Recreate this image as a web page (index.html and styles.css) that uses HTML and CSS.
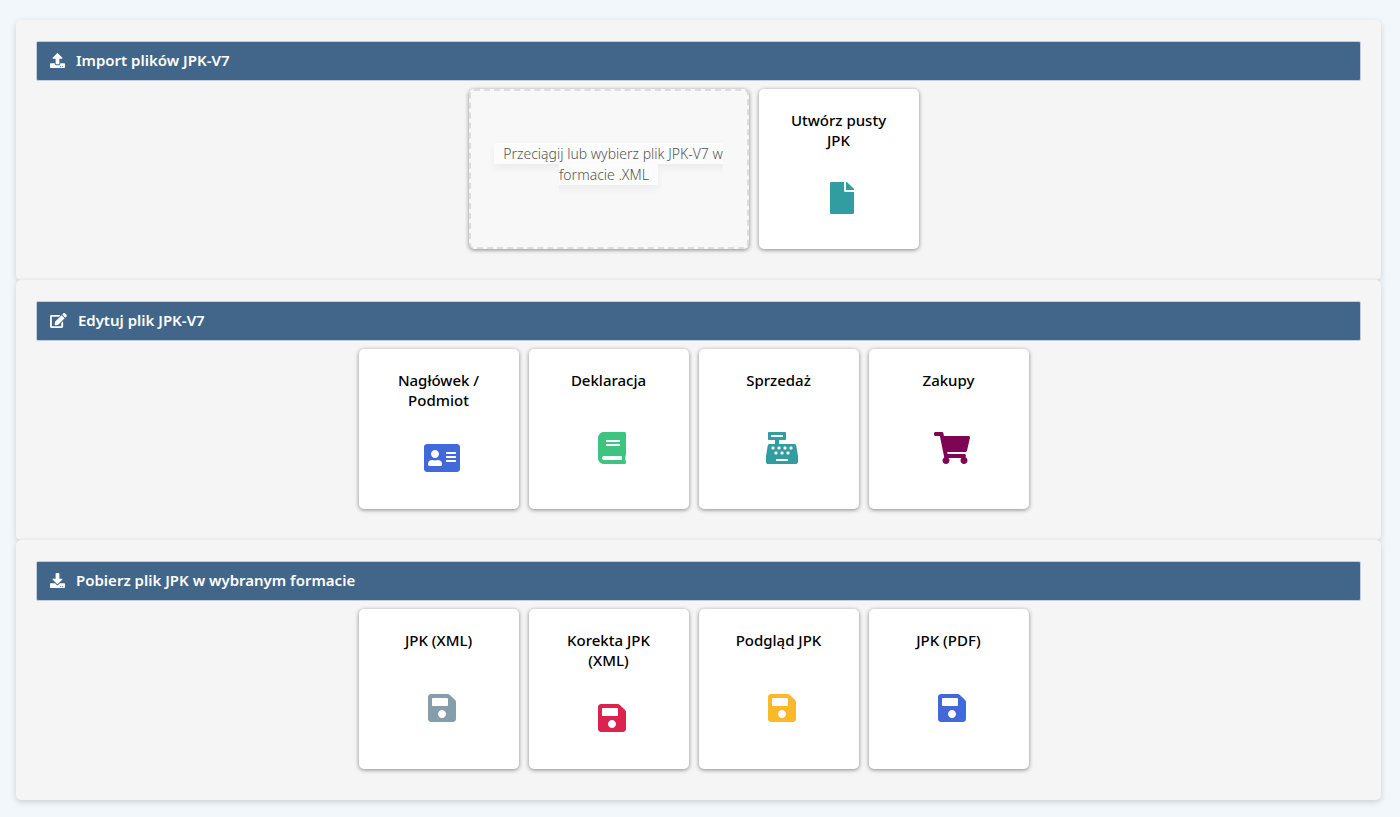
FILE: index.html
```
<!DOCTYPE html>
<html lang="pl">
<head>
    <meta charset="UTF-8">
    <meta name="viewport" content="width=device-width, initial-scale=1.0">
    <title>JPK-V7</title>
    <link rel="stylesheet" href="styles.css">
</head>
<body>
    <svg class="sprite" aria-hidden="true">
        <symbol id="save" viewBox="0 0 448 512">
            <path d="M433.941 129.941l-83.882-83.882A48 48 0 0 0 316.118 32H48C21.49 32 0 53.49 0 80v352c0 26.51 21.49 48 48 48h352c26.51 0 48-21.49 48-48V163.882a48 48 0 0 0-14.059-33.941zM224 416c-35.346 0-64-28.654-64-64 0-35.346 28.654-64 64-64s64 28.654 64 64c0 35.346-28.654 64-64 64zm96-304.52V212c0 6.627-5.373 12-12 12H76c-6.627 0-12-5.373-12-12V108c0-6.627 5.373-12 12-12h228.52c3.183 0 6.235 1.264 8.485 3.515l3.48 3.48A11.996 11.996 0 0 1 320 111.48z"/>
        </symbol>
    </svg>

    <main class="container">
        <section class="panel">
            <h2 class="panel-header">
                <svg class="header-icon" viewBox="0 0 512 512" aria-hidden="true"><path d="M296 384h-80c-13.3 0-24-10.7-24-24V192h-87.7c-17.8 0-26.7-21.5-14.1-34.1L242.3 5.7c7.5-7.5 19.8-7.5 27.3 0l152.2 152.2c12.6 12.6 3.7 34.1-14.1 34.1H320v168c0 13.3-10.7 24-24 24zm216-8v112c0 13.3-10.7 24-24 24H24c-13.3 0-24-10.7-24-24V376c0-13.3 10.7-24 24-24h136v8c0 30.9 25.1 56 56 56h80c30.9 0 56-25.1 56-56v-8h136c13.3 0 24 10.7 24 24zm-124 88c0-11-9-20-20-20s-20 9-20 20 9 20 20 20 20-9 20-20zm64 0c0-11-9-20-20-20s-20 9-20 20 9 20 20 20 20-9 20-20z"/></svg>
                Import plików JPK-V7
            </h2>
            <div class="tiles">
                <label class="tile dropzone" for="jpk_file">
                    <input class="file-input" type="file" id="jpk_file" accept=".xml">
                    <span class="dropzone-body"><span class="dropzone-text">Przeciągij lub wybierz plik JPK-V7 w formacie .XML</span></span>
                </label>
                <button class="tile" type="button">
                    <span class="tile-title">Utwórz pusty JPK</span>
                    <span class="tile-icon teal"><svg viewBox="0 0 384 512" aria-hidden="true"><path d="M224 136V0H24C10.7 0 0 10.7 0 24v464c0 13.3 10.7 24 24 24h336c13.3 0 24-10.7 24-24V160H248c-13.2 0-24-10.8-24-24zm160-14.1v6.1H256V0h6.1c6.4 0 12.5 2.5 17 7l97.9 98c4.5 4.5 7 10.6 7 16.9z"/></svg></span>
                </button>
            </div>
        </section>

        <section class="panel">
            <h2 class="panel-header">
                <svg class="header-icon" viewBox="0 0 576 512" aria-hidden="true"><path d="M402.6 83.2l90.2 90.2c3.8 3.8 3.8 10 0 13.8L274.4 405.6l-92.8 10.3c-12.4 1.4-22.9-9.1-21.5-21.5l10.3-92.8L388.8 83.2c3.8-3.8 10-3.8 13.8 0zm162-22.9l-48.8-48.8c-15.2-15.2-39.9-15.2-55.2 0l-35.4 35.4c-3.8 3.8-3.8 10 0 13.8l90.2 90.2c3.8 3.8 10 3.8 13.8 0l35.4-35.4c15.2-15.3 15.2-40 0-55.2zM384 346.2V448H64V128h229.8c3.2 0 6.2-1.3 8.5-3.5l40-40c7.6-7.6 2.2-20.5-8.5-20.5H48C21.5 64 0 85.5 0 112v352c0 26.5 21.5 48 48 48h352c26.5 0 48-21.5 48-48V306.2c0-10.7-12.9-16-20.5-8.5l-40 40c-2.2 2.3-3.5 5.3-3.5 8.5z"/></svg>
                Edytuj plik JPK-V7
            </h2>
            <div class="tiles">
                <button class="tile" type="button">
                    <span class="tile-title">Nagłówek / Podmiot</span>
                    <span class="tile-icon blue"><svg viewBox="0 0 576 512" aria-hidden="true"><path d="M528 32H48C21.5 32 0 53.5 0 80v352c0 26.5 21.5 48 48 48h480c26.5 0 48-21.5 48-48V80c0-26.5-21.5-48-48-48zm-352 96c35.3 0 64 28.7 64 64s-28.7 64-64 64-64-28.7-64-64 28.7-64 64-64zm112 236.8c0 10.6-10 19.2-22.4 19.2H86.4C74 384 64 375.4 64 364.8v-19.2c0-31.8 30.1-57.6 67.2-57.6h5c12.3 5.1 25.7 8 39.8 8s27.6-2.9 39.8-8h5c37.1 0 67.2 25.8 67.2 57.6v19.2zM512 312c0 4.4-3.6 8-8 8H360c-4.4 0-8-3.6-8-8v-16c0-4.4 3.6-8 8-8h144c4.4 0 8 3.6 8 8v16zm0-64c0 4.4-3.6 8-8 8H360c-4.4 0-8-3.6-8-8v-16c0-4.4 3.6-8 8-8h144c4.4 0 8 3.6 8 8v16zm0-64c0 4.4-3.6 8-8 8H360c-4.4 0-8-3.6-8-8v-16c0-4.4 3.6-8 8-8h144c4.4 0 8 3.6 8 8v16z"/></svg></span>
                </button>
                <button class="tile" type="button">
                    <span class="tile-title">Deklaracja</span>
                    <span class="tile-icon green"><svg viewBox="0 0 448 512" aria-hidden="true"><path d="M448 360V24c0-13.3-10.7-24-24-24H96C43 0 0 43 0 96v320c0 53 43 96 96 96h328c13.3 0 24-10.7 24-24v-16c0-7.5-3.5-14.3-8.9-18.7-4.2-15.4-4.2-59.3 0-74.7 5.4-4.3 8.9-11.1 8.9-18.6zM128 134c0-3.3 2.7-6 6-6h212c3.3 0 6 2.7 6 6v20c0 3.3-2.7 6-6 6H134c-3.3 0-6-2.7-6-6v-20zm0 64c0-3.3 2.7-6 6-6h212c3.3 0 6 2.7 6 6v20c0 3.3-2.7 6-6 6H134c-3.3 0-6-2.7-6-6v-20zm253.4 250H96c-17.7 0-32-14.3-32-32 0-17.6 14.4-32 32-32h285.4c-1.9 17.1-1.9 46.9 0 64z"/></svg></span>
                </button>
                <button class="tile" type="button">
                    <span class="tile-title">Sprzedaż</span>
                    <span class="tile-icon teal"><svg viewBox="0 0 512 512" aria-hidden="true"><path fill-rule="evenodd" d="M511.1 378.8l-26.7-160c-2.6-15.4-15.9-26.7-31.6-26.7H208v-64h96c8.8 0 16-7.2 16-16V16c0-8.8-7.2-16-16-16H48c-8.8 0-16 7.2-16 16v96c0 8.8 7.2 16 16 16h96v64H59.1c-15.6 0-29 11.3-31.6 26.7L.8 378.7c-.6 3.5-.9 7-.9 10.5V480c0 17.7 14.3 32 32 32h448c17.7 0 32-14.3 32-32v-90.7c.1-3.5-.2-7-.8-10.5zM80 48h192v32H80zM104 232h16a16 16 0 0 1 16 16v16a16 16 0 0 1-16 16h-16a16 16 0 0 1-16-16v-16a16 16 0 0 1 16-16zM200 232h16a16 16 0 0 1 16 16v16a16 16 0 0 1-16 16h-16a16 16 0 0 1-16-16v-16a16 16 0 0 1 16-16zM296 232h16a16 16 0 0 1 16 16v16a16 16 0 0 1-16 16h-16a16 16 0 0 1-16-16v-16a16 16 0 0 1 16-16zM392 232h16a16 16 0 0 1 16 16v16a16 16 0 0 1-16 16h-16a16 16 0 0 1-16-16v-16a16 16 0 0 1 16-16zM152 312h16a16 16 0 0 1 16 16v16a16 16 0 0 1-16 16h-16a16 16 0 0 1-16-16v-16a16 16 0 0 1 16-16zM248 312h16a16 16 0 0 1 16 16v16a16 16 0 0 1-16 16h-16a16 16 0 0 1-16-16v-16a16 16 0 0 1 16-16zM344 312h16a16 16 0 0 1 16 16v16a16 16 0 0 1-16 16h-16a16 16 0 0 1-16-16v-16a16 16 0 0 1 16-16zM168 432h176a8 8 0 0 1 8 8v16a8 8 0 0 1-8 8H168a8 8 0 0 1-8-8v-16a8 8 0 0 1 8-8z"/></svg></span>
                </button>
                <button class="tile" type="button">
                    <span class="tile-title">Zakupy</span>
                    <span class="tile-icon purple"><svg viewBox="0 0 576 512" aria-hidden="true"><path d="M528.12 301.319l47.273-208C578.806 78.301 567.391 64 551.99 64H159.208l-9.166-44.81C147.758 8.021 137.93 0 126.529 0H24C10.745 0 0 10.745 0 24v16c0 13.255 10.745 24 24 24h69.883l70.248 343.435C147.325 417.1 136 435.222 136 456c0 30.928 25.072 56 56 56s56-25.072 56-56c0-15.674-6.447-29.835-16.824-40h209.647C430.447 426.165 424 440.326 424 456c0 30.928 25.072 56 56 56s56-25.072 56-56c0-22.172-12.888-41.332-31.579-50.405l5.517-24.276c3.413-15.018-8.002-29.319-23.403-29.319H218.117l-6.545-32h293.145c11.206 0 20.92-7.754 23.403-18.681z"/></svg></span>
                </button>
            </div>
        </section>

        <section class="panel">
            <h2 class="panel-header">
                <svg class="header-icon" viewBox="0 0 512 512" aria-hidden="true"><path d="M216 0h80c13.3 0 24 10.7 24 24v168h87.7c17.8 0 26.7 21.5 14.1 34.1L269.7 378.3c-7.5 7.5-19.8 7.5-27.3 0L90.1 226.1c-12.6-12.6-3.7-34.1 14.1-34.1H192V24c0-13.3 10.7-24 24-24zm296 376v112c0 13.3-10.7 24-24 24H24c-13.3 0-24-10.7-24-24V376c0-13.3 10.7-24 24-24h146.7l49 49c20.1 20.1 52.5 20.1 72.6 0l49-49H488c13.3 0 24 10.7 24 24zm-124 88c0-11-9-20-20-20s-20 9-20 20 9 20 20 20 20-9 20-20zm64 0c0-11-9-20-20-20s-20 9-20 20 9 20 20 20 20-9 20-20z"/></svg>
                Pobierz plik JPK w wybranym formacie
            </h2>
            <div class="tiles">
                <button class="tile" type="button">
                    <span class="tile-title">JPK (XML)</span>
                    <span class="tile-icon gray"><svg viewBox="0 0 448 512" aria-hidden="true"><use href="#save"/></svg></span>
                </button>
                <button class="tile" type="button">
                    <span class="tile-title">Korekta JPK (XML)</span>
                    <span class="tile-icon red"><svg viewBox="0 0 448 512" aria-hidden="true"><use href="#save"/></svg></span>
                </button>
                <button class="tile" type="button">
                    <span class="tile-title">Podgląd JPK</span>
                    <span class="tile-icon yellow"><svg viewBox="0 0 448 512" aria-hidden="true"><use href="#save"/></svg></span>
                </button>
                <button class="tile" type="button">
                    <span class="tile-title">JPK (PDF)</span>
                    <span class="tile-icon blue"><svg viewBox="0 0 448 512" aria-hidden="true"><use href="#save"/></svg></span>
                </button>
            </div>
        </section>
    </main>
</body>
</html>
```
FILE: styles.css
```
* {
    box-sizing: border-box;
}

body {
    font-family: 'Noto Sans', 'Open Sans', sans-serif;
    margin: 0;
    background: #f1f7fb;
    color: #000;
}

.sprite {
    display: none;
}

.container {
    padding: 20px 19px 17px 16px;
}

.panel {
    background: #f5f5f5;
    border-radius: 5px;
    padding: 21px 20px 31px;
    box-shadow: 0 2px 6px rgba(0, 0, 0, 0.16);
}

.panel-header {
    display: flex;
    align-items: center;
    gap: 11px;
    min-height: 40px;
    margin: 0 0 8px;
    padding: 0 13px 2px;
    background: #416689;
    border: 1px solid #c3cddd;
    border-radius: 2px;
    color: #fff;
    font-size: 15px;
    font-weight: 600;
    line-height: 20px;
}

.header-icon {
    height: 15px;
    fill: currentColor;
}

.tiles {
    display: flex;
    flex-wrap: wrap;
    justify-content: center;
    gap: 10px;
    padding-right: 10px;
}

.tile {
    display: flex;
    flex-direction: column;
    width: 160px;
    height: 160px;
    padding: 21px 24px 3px;
    background: #fff;
    border: none;
    border-radius: 5px;
    box-shadow: 0 1px 4px rgba(0, 0, 0, 0.45);
    color: #000;
    font-family: inherit;
    font-size: 15px;
    font-weight: 500;
    line-height: 20px;
    text-align: center;
    cursor: pointer;
}

.tile-title {
    width: 100%;
}

.tile-icon {
    flex: 1;
    display: flex;
    align-items: center;
    justify-content: center;
    width: 100%;
    padding-left: 7px;
}

.tile-icon svg {
    height: 32px;
    fill: currentColor;
}

.dropzone {
    width: 280px;
    padding: 0 20px 10px;
    justify-content: center;
    background: #f8f8f8;
    border: 2px dashed #ddd;
    color: #555;
    font-size: 14px;
    font-weight: 300;
    line-height: 21px;
}

.dropzone-text {
    padding: 1px 9px;
    background: #fcfcfc;
    box-shadow: 0 4px 8px rgba(0, 0, 0, 0.05);
}

.file-input {
    position: absolute;
    width: 1px;
    height: 1px;
    opacity: 0;
}

.teal {
    color: #329da0;
}

.blue {
    color: #4169d9;
}

.green {
    color: #3cc480;
}

.purple {
    color: #7f0454;
}

.gray {
    color: #869dab;
}

.red {
    color: #dc2350;
}

.yellow {
    color: #fbb829;
}
```
